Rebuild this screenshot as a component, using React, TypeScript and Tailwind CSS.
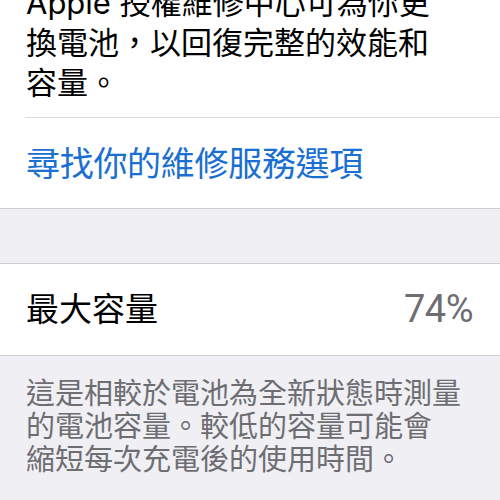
import React from "react";

export default function App() {
  const font = { fontFamily: '"Inter", "Noto Sans CJK TC", sans-serif' };
  return (
    <div className="w-[500px] h-[500px] overflow-hidden bg-[#efeff4]" style={font}>
      <div className="bg-white">
        <div className="pl-[26px] pr-[20px] -mt-[17px] pb-[14px]">
          <p className="text-[31px] leading-[40px] text-black whitespace-nowrap">
            Apple 授權維修中心可為你更
            <br />
            換電池，以回復完整的效能和
            <br />
            容量。
          </p>
        </div>
        <div className="ml-[25px] h-[1px] bg-[#dcdcdf]" />
        <div className="h-[90px] flex items-center pl-[26px]">
          <span className="text-[34px] text-[#1a6fd2] tracking-[-0.3px]">尋找你的維修服務選項</span>
        </div>
      </div>
      <div className="h-[1px] bg-[#d0d0d4]" />
      <div className="h-[54px]" />
      <div className="h-[1px] bg-[#d0d0d4]" />
      <div className="bg-white h-[91px] flex items-center justify-between pl-[26px] pr-[27px]">
        <span className="text-[33px] text-black">最大容量</span>
        <span
          className="text-[38px] text-[#6e6e72] font-normal tracking-[-0.5px]"
          style={{ fontFamily: '"Roboto", sans-serif' }}
        >
          74%
        </span>
      </div>
      <div className="h-[1px] bg-[#d0d0d4]" />
      <div className="pl-[26px] pr-[10px] pt-[21px]">
        <p className="text-[29px] leading-[33px] text-[#6d6d72] whitespace-nowrap">
          這是相較於電池為全新狀態時測量
          <br />
          的電池容量。較低的容量可能會
          <br />
          縮短每次充電後的使用時間。
        </p>
      </div>
    </div>
  );
}
